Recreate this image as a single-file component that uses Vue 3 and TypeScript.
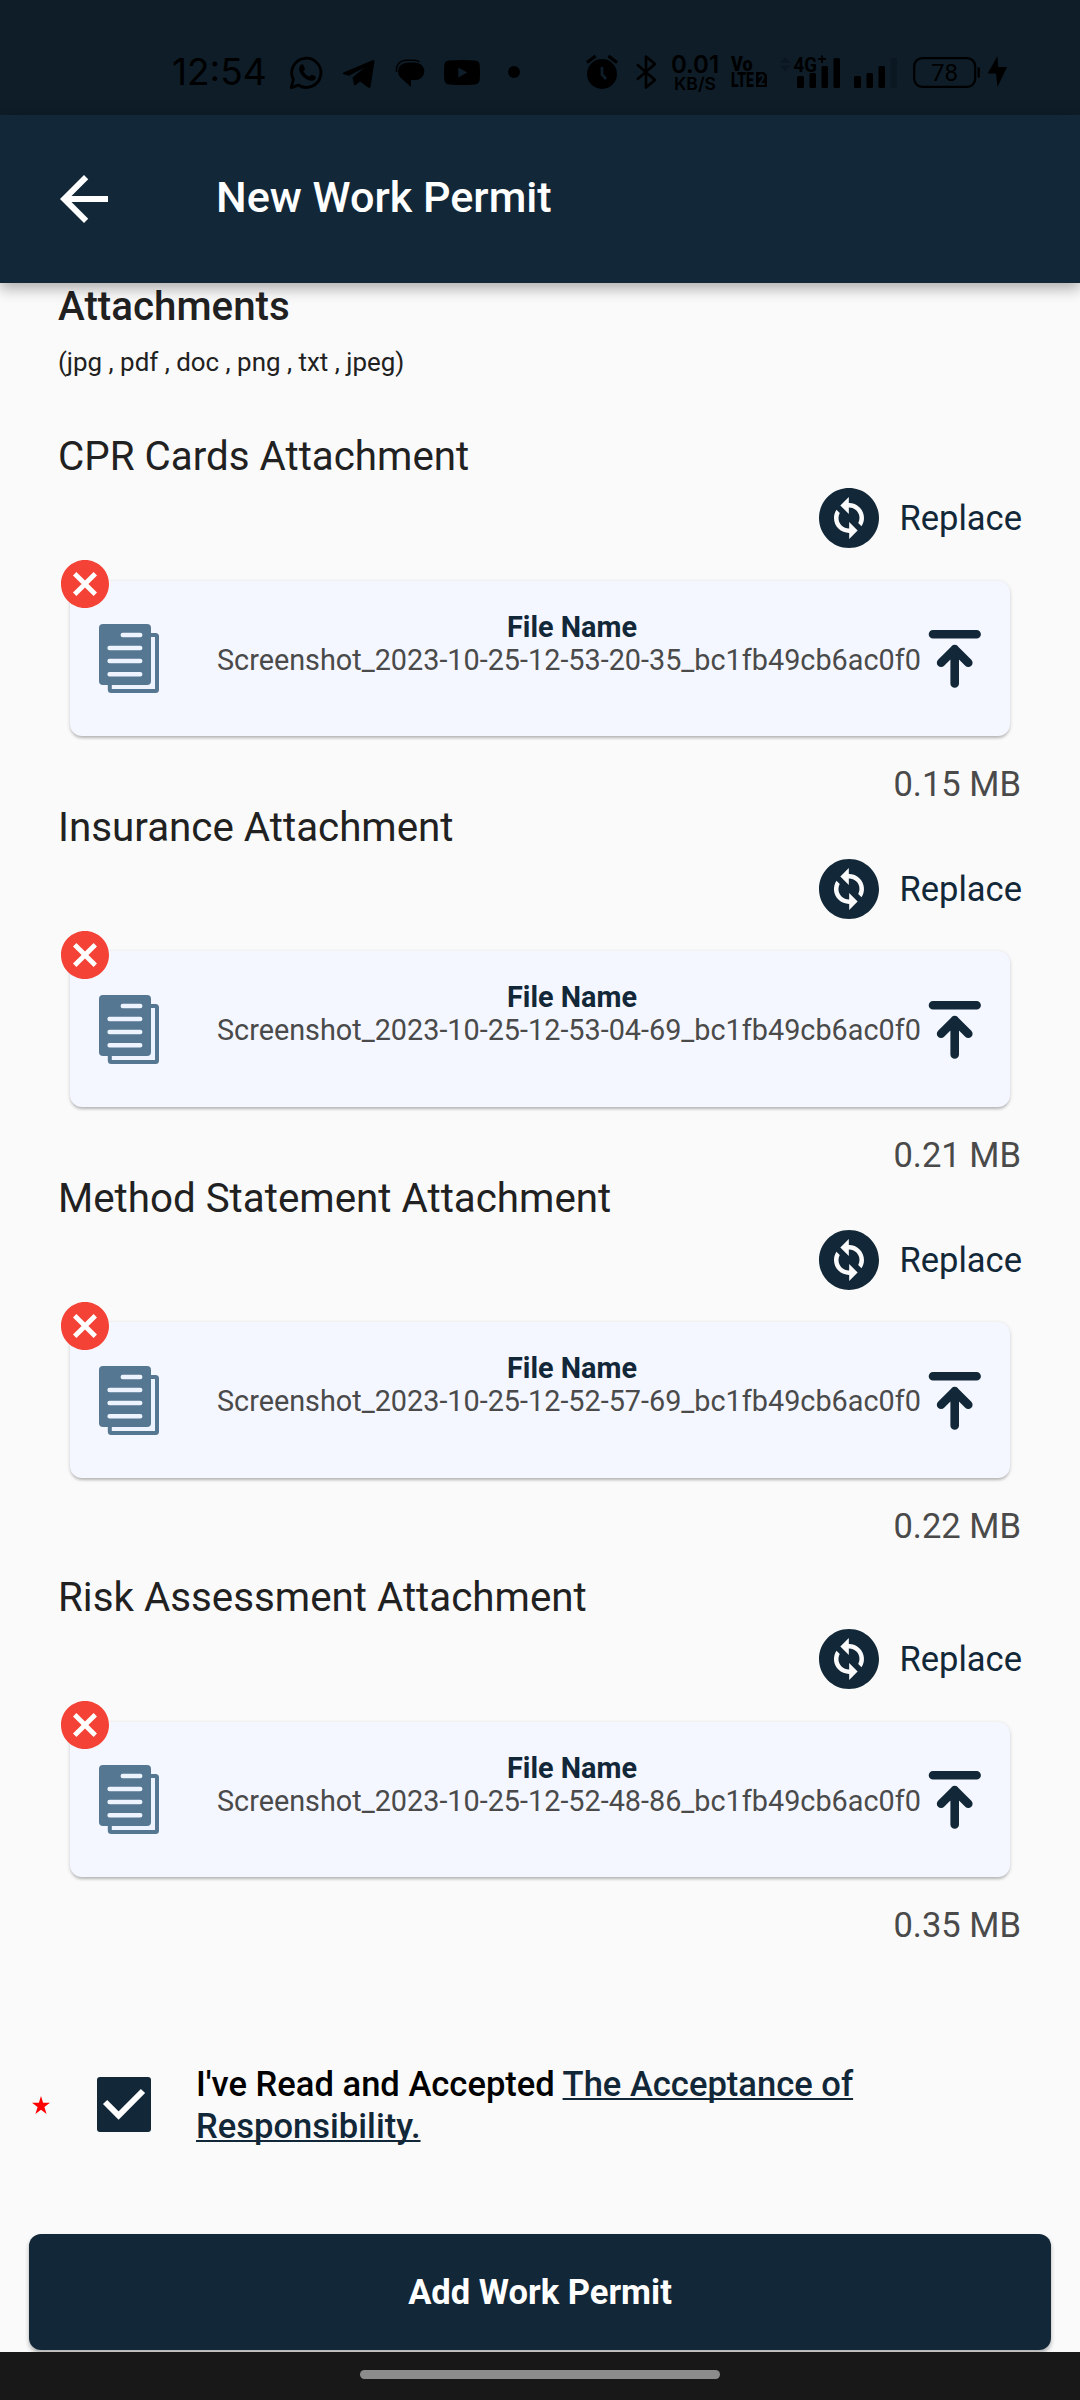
<script setup lang="ts">
interface Attachment {
  title: string
  file: string
  size: string
}

const attachments: Attachment[] = [
  { title: 'CPR Cards Attachment', file: 'Screenshot_2023-10-25-12-53-20-35_bc1fb49cb6ac0f0', size: '0.15 MB' },
  { title: 'Insurance Attachment', file: 'Screenshot_2023-10-25-12-53-04-69_bc1fb49cb6ac0f0', size: '0.21 MB' },
  { title: 'Method Statement Attachment', file: 'Screenshot_2023-10-25-12-52-57-69_bc1fb49cb6ac0f0', size: '0.22 MB' },
  { title: 'Risk Assessment Attachment', file: 'Screenshot_2023-10-25-12-52-48-86_bc1fb49cb6ac0f0', size: '0.35 MB' },
]
</script>

<template>
  <div class="screen">
    <div class="status">
      <div class="cluster">
        <span class="time">12:54</span>
        <!-- WhatsApp -->
        <svg class="whatsapp" width="34" height="36" viewBox="289 54 34 36">
          <path d="M291.2 87.6l2.2-8a14.6 14.6 0 1 1 5.2 5.6z" fill="none" stroke="#000" stroke-width="2.8" stroke-linejoin="round" />
          <path d="M300.6 65c1-1.100 2.300-1 2.900.2l1.400 3.200c.3.900-.9 2-1.600 2.900 1.300 2.700 3.300 4.400 6 5.500.9-.9 1.600-2.300 2.600-2.100l3.300 1.600c1 .6.600 2.500-.6 3.500-4.700 4-16.600-5-15.300-11.800.2-1.200.6-2.200 1.300-3z" />
        </svg>
        <!-- Telegram -->
        <svg class="telegram" width="34" height="30" viewBox="341 59 34 30">
          <path d="M343.500 72.500L372.500 60.200q2.200-.7 1.900 1.600L370.600 86.600q-.6 2-2.400.9L360 81.500l-4.400 3.600q-1.500.8-1.800-1L352.500 77.500l12-10-15.500 8.200-5.400-1.500q-1.800-.8-.1-1.700z" />
        </svg>
        <!-- Message bubbles -->
        <svg class="chat" width="30" height="30" viewBox="395 58 30 30">
          <path d="M396.500 72c-.8-7 3.500-11.800 10-11.800h7c3 0 4.600.6 6 1.600" fill="none" stroke="#000" stroke-width="1.600" />
          <path d="M408.500 62.500h6c5.600 0 9.800 3.600 9.800 8.700 0 5.200-4.300 8.800-9.500 8.800H411v7l-10.500-9.500c-1.700-1.800-2.400-4-2.400-6.300 0-5.100 4.200-8.700 10.400-8.700z" />
        </svg>
        <!-- YouTube -->
        <svg class="youtube" width="36" height="25" viewBox="0 0 36 25">
          <path fill-rule="evenodd" d="M5 .6Q18-.5 31 .6q4.400.4 4.700 4.600.6 7.300 0 14.600-.3 4.200-4.700 4.600-13 1.100-26 0-4.400-.4-4.700-4.600-.6-7.300 0-14.600Q.6 1 5 .6zM14.300 7.500v10l9-5z" />
        </svg>
        <span class="dot"></span>
      </div>

      <div class="cluster right">
        <!-- Alarm -->
        <svg width="34" height="36" viewBox="585 54 34 36">
          <circle cx="602" cy="74" r="15" />
          <path d="M587 62.500l8.600-6.500M617 62.500l-8.600-6.500" stroke="#000" stroke-width="3.200" />
          <path d="M602 67v7.500l4 4.500" fill="none" stroke="#0e1d28" stroke-width="2.800" />
        </svg>
        <!-- Bluetooth -->
        <svg class="bluetooth" width="22" height="36" viewBox="635 54 22 36">
          <path d="M637 64.500l18 15.500-9 7.500v-31l9 7.500-18 15.500" fill="none" stroke="#000" stroke-width="2.600" stroke-linejoin="round" />
        </svg>
        <div class="rate"><span class="num">0.01</span><span class="unit">KB/S</span></div>
        <!-- VoLTE -->
        <svg class="volte" width="38" height="34" viewBox="730 55 38 34">
          <g font-family="Roboto, sans-serif" font-weight="900">
            <text x="731" y="70.500" font-size="19.500" textLength="21.500" lengthAdjust="spacingAndGlyphs">Vo</text>
            <text x="731" y="87" font-size="20.500" textLength="23" lengthAdjust="spacingAndGlyphs">LTE</text>
            <path d="M756 72h8l3 3v12h-11z" />
            <text x="758" y="85" font-size="15" fill="#0e1d28" textLength="7" lengthAdjust="spacingAndGlyphs">2</text>
          </g>
        </svg>
        <!-- Mobile data and signal of the first SIM -->
        <svg class="signal-a" width="62" height="36" viewBox="780 53 62 36">
          <path d="M780.500 62l4.800-6 4.800 6zM780.500 64.500l4.800 6 4.800-6z" fill="#0b1720" />
          <text x="793.500" y="70.500" font-family="Roboto, sans-serif" font-weight="700" font-size="20" textLength="23.500" lengthAdjust="spacingAndGlyphs">4G</text>
          <path d="M818 58h8M822 54.500v7.500" stroke="#000" stroke-width="2" />
          <rect x="797" y="75" width="7" height="12" rx="1.500" />
          <rect x="809.500" y="72" width="6.500" height="15" rx="1.500" />
          <rect x="821.500" y="65" width="6.500" height="22" rx="1.500" />
          <rect x="833.500" y="57" width="6.500" height="30" rx="1.500" />
        </svg>
        <!-- Signal of the second SIM -->
        <svg class="signal-b" width="44" height="36" viewBox="854 53 44 36">
          <rect x="854" y="75" width="7" height="12" rx="1.500" />
          <rect x="866.500" y="72" width="6.500" height="15" rx="1.500" />
          <rect x="878.500" y="65" width="6.500" height="22" rx="1.500" />
          <rect x="890.500" y="57" width="6.500" height="30" rx="1.500" fill="#0b1821" />
        </svg>
        <!-- Battery -->
        <svg class="battery" width="68" height="34" viewBox="912 55 68 34">
          <rect x="914.200" y="58.200" width="61" height="28.600" rx="8" fill="none" stroke="#000" stroke-width="2.200" />
          <path d="M978.700 67.500v10" stroke="#000" stroke-width="2.400" />
          <text x="944.500" y="81" text-anchor="middle" font-family="Roboto, sans-serif" font-size="24">78</text>
        </svg>
        <svg class="bolt" width="20" height="32" viewBox="987 57 20 32">
          <path d="M997.500 57l-9.800 17.500h8.300l1.500 13.500 9.500-20h-8.800z" />
        </svg>
      </div>
    </div>

    <header class="appbar">
      <svg width="72" height="72" viewBox="0 0 24 24" fill="#fff">
        <path d="M20 11H7.830l5.590-5.590L12 4l-8 8 8 8 1.410-1.410L7.830 13H20v-2z" />
      </svg>
      <h1>New Work Permit</h1>
    </header>

    <main>
      <div class="body">
        <h2>Attachments</h2>
        <p class="formats">(jpg , pdf , doc , png , txt , jpeg)</p>

        <section v-for="item in attachments" :key="item.title">
          <h3>{{ item.title }}</h3>
          <div class="replace">
            <svg width="60" height="60" viewBox="2 2 20 20">
              <path fill="#122838" d="M12 2C6.480 2 2 6.480 2 12s4.480 10 10 10 10-4.480 10-10S17.520 2 12 2zM12.060 19v-2.010H12c-1.280 0-2.560-.49-3.540-1.460-1.710-1.710-1.920-4.350-.64-6.290l1.100 1.100c-.71 1.330-.53 3.010.59 4.130.7.7 1.620 1.030 2.540 1.010v-2.140l2.830 2.830L12.060 19zM16.170 14.760l-1.100-1.100c.71-1.330.53-3.010-.59-4.130C13.790 8.840 12.900 8.500 12 8.500h-.06v2.150L9.110 7.830 11.940 5v2.020c1.300-.02 2.610.45 3.600 1.450 1.700 1.700 1.910 4.350.63 6.290z" />
            </svg>
            <span>Replace</span>
          </div>
          <div class="card">
            <svg class="delete" width="48" height="48" viewBox="2 2 20 20">
              <circle cx="12" cy="12" r="9" fill="#fff" />
              <path fill="#f44336" d="M12 2C6.470 2 2 6.470 2 12s4.470 10 10 10 10-4.470 10-10S17.530 2 12 2zm5 13.590L15.590 17 12 13.410 8.410 17 7 15.590 10.590 12 7 8.410 8.410 7 12 10.590 15.590 7 17 8.410 13.410 12 17 15.590z" />
            </svg>
            <svg class="doc" width="60" height="69" viewBox="0 0 60 69">
              <rect x="10.800" y="11" width="47.200" height="56" rx="1.500" fill="#edf4ff" stroke="#557791" stroke-width="4" />
              <rect width="52" height="61" rx="4" fill="#557791" />
              <path d="M23.800 11h17.400M10.600 24h30.600M10.600 37h30.600M10.600 50.200h30.600" stroke="#edf4ff" stroke-width="4.500" stroke-linecap="round" />
            </svg>
            <div class="file">
              <strong>File Name</strong>
              <span>{{ item.file }}</span>
            </div>
            <svg class="upload" width="54" height="60" viewBox="0 0 54 60" fill="none" stroke="#122838" stroke-width="8.600" stroke-linecap="round" stroke-linejoin="round">
              <path d="M5 5.300h43.600M26.700 20v34.500M13.100 33.800l13.600-13.600 13.600 13.600" />
            </svg>
          </div>
          <p class="size">{{ item.size }}</p>
        </section>
      </div>

      <div class="accept">
        <svg class="star" width="18" height="18" viewBox="0 0 18 18" fill="#f00">
          <path d="M9 0l2.100 6.800H18l-5.600 4.100L14.600 18 9 13.700 3.400 18l2.200-7.100L0 6.800h6.900z" />
        </svg>
        <svg class="check" width="54" height="55" viewBox="0 0 54 55">
          <rect width="54" height="55" rx="3" fill="#122838" />
          <path d="M8.100 25l13.500 13.500L46 14" fill="none" stroke="#fff" stroke-width="6" />
        </svg>
        <p>I've Read and Accepted <a>The Acceptance of Responsibility.</a></p>
      </div>

      <button type="button">Add Work Permit</button>
    </main>

    <nav><span></span></nav>
  </div>
</template>

<style>
body {
  margin: 0;
  background: #fafafa;
}
</style>

<style scoped>
.screen {
  display: flex;
  flex-direction: column;
  width: 1080px;
  height: 2400px;
  overflow: hidden;
  background: #fafafa;
  font-family: Roboto, sans-serif;
  color: #212121;
}

h1, h2, h3, p { margin: 0; }
svg { display: block; flex: none; }

.status {
  display: flex;
  justify-content: space-between;
  box-sizing: border-box;
  flex: none;
  height: 115px;
  padding: 30px 73px 0 172px;
  background: #0e1d28;
  color: #000;
}
.cluster {
  display: flex;
  align-items: center;
  height: 84px;
}
.time {
  width: 117px;
  font: 400 37px/46px Inter, sans-serif;
}
.telegram { margin-left: 18px; margin-top: 4px; }
.chat { margin-left: 20px; margin-top: 2px; }
.youtube { margin-left: 19px; margin-top: 1px; }
.dot {
  width: 12px;
  height: 12px;
  margin-left: 28px;
  border-radius: 50%;
  background: #000;
}
.bluetooth { margin-left: 16px; }
.rate {
  display: flex;
  flex-direction: column;
  align-items: center;
  width: 50px;
  margin: 3px 0 0 13px;
  font-family: Inter, sans-serif;
  font-weight: 600;
}
.num { font-size: 24px; line-height: 20px; }
.unit { font-size: 17.500px; line-height: 18px; }
.volte { margin-left: 10px; }
.signal-a { margin-left: 12px; }
.signal-b { margin-left: 12px; }
.battery { margin-left: 14px; }
.bolt { margin-left: 7px; }

.appbar {
  position: relative;
  z-index: 1;
  display: flex;
  align-items: center;
  flex: none;
  box-sizing: border-box;
  height: 168px;
  padding: 0 48px;
  background: #122838;
  box-shadow: 0 6px 12px rgba(0, 0, 0, 0.22), 0 3px 20px rgba(0, 0, 0, 0.12);
}
h1 {
  margin: 0 0 2px 96px;
  font-size: 43.200px;
  font-weight: 500;
  line-height: 50px;
  color: #fff;
}

main {
  display: flex;
  flex-direction: column;
  flex: 1;
  min-height: 0;
  overflow: hidden;
}
.body { padding: 1px 58px 0; }
h2 {
  font-size: 40.320px;
  font-weight: 500;
  line-height: 46px;
}
.formats {
  margin: 17px 0 56px;
  font-size: 25.920px;
  line-height: 30px;
}
section { height: 370.750px; }
section:last-child { margin-top: 28.750px; }
h3 {
  padding-top: 1px;
  font-size: 40.320px;
  font-weight: 400;
  line-height: 46px;
}
.replace {
  display: flex;
  justify-content: flex-end;
  align-items: center;
  gap: 20px;
  height: 60px;
  margin-top: 8px;
  font-size: 34.560px;
  color: #122838;
}
.card {
  position: relative;
  display: flex;
  box-sizing: border-box;
  height: 155.500px;
  margin: 32.500px 12.500px 0 12px;
  padding-left: 29px;
  border-radius: 12px;
  background: #f4f7ff;
  box-shadow: 0 3px 3px -1px rgba(0, 0, 0, 0.2), 0 1px 4px rgba(0, 0, 0, 0.14);
}
.delete {
  position: absolute;
  left: -9px;
  top: -20.500px;
}
.doc { margin-top: 43.500px; }
.file {
  display: flex;
  flex-direction: column;
  width: 710px;
  margin: 30px 0 0 58px;
  font-size: 28.800px;
  line-height: 33px;
  white-space: nowrap;
}
.file strong { text-align: center; color: #122838; }
.file span { color: #4a4a4a; }
.upload { margin: 48.500px 0 0 1px; }
.size {
  margin-top: 28px;
  padding-right: 1px;
  text-align: right;
  font-size: 34.560px;
  line-height: 40px;
  color: #4a4a4a;
}

.accept {
  display: flex;
  align-items: center;
  margin-top: 118.250px;
  padding: 0 58px 0 32px;
}
.check { margin: 0 0 2px 47px; }
.accept p {
  flex: 1;
  margin-left: 45px;
  font-size: 34.560px;
  font-weight: 500;
  line-height: 42px;
  color: #000;
}
.accept a {
  color: #122838;
  text-decoration: underline;
  text-decoration-thickness: 2px;
  text-decoration-skip-ink: none;
  text-underline-offset: 2px;
}

button {
  flex: none;
  height: 116px;
  margin: 86.500px 29px 0;
  border: 0;
  border-radius: 12px;
  background: #122838;
  box-shadow: 0 3px 4px rgba(0, 0, 0, 0.3);
  font: 700 34.560px/40px Roboto, sans-serif;
  color: #fff;
}

nav {
  display: flex;
  justify-content: center;
  flex: none;
  height: 48px;
  background: #181818;
}
nav span {
  width: 360px;
  height: 9px;
  margin-top: 18px;
  border-radius: 5px;
  background: #8c8c8c;
}
</style>
